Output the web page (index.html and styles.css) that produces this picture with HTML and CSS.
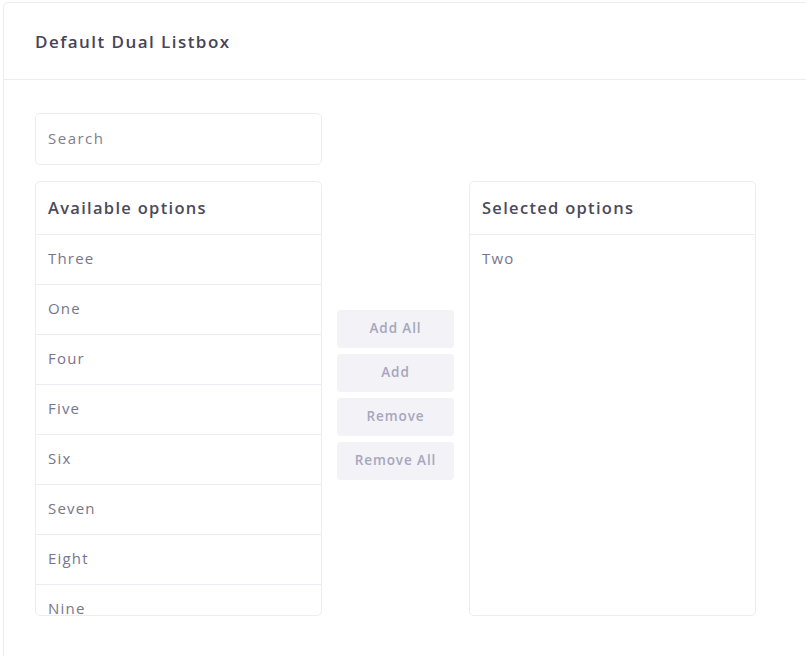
FILE: index.html
```html
<!DOCTYPE html>
<html lang="en">
<head>
<meta charset="utf-8">
<title>Default Dual Listbox</title>
<link rel="stylesheet" href="styles.css">
</head>
<body>
<div class="card">
  <div class="card-header">
    <h3 class="card-title">Default Dual Listbox</h3>
  </div>
  <div class="card-body">
    <input class="search" type="text" placeholder="Search">
    <div class="dual">
      <div class="list">
        <div class="list-title">Available options</div>
        <ul class="items">
          <li>Three</li>
          <li>One</li>
          <li>Four</li>
          <li>Five</li>
          <li>Six</li>
          <li>Seven</li>
          <li>Eight</li>
          <li>Nine</li>
        </ul>
      </div>
      <div class="actions">
        <button class="btn">Add All</button>
        <button class="btn">Add</button>
        <button class="btn">Remove</button>
        <button class="btn">Remove All</button>
      </div>
      <div class="list">
        <div class="list-title">Selected options</div>
        <ul class="items">
          <li class="plain">Two</li>
        </ul>
      </div>
    </div>
  </div>
</div>
</body>
</html>
```
FILE: styles.css
```css
html, body {
  margin: 0;
  padding: 0;
  overflow: hidden;
  background: #ffffff;
}
body {
  font-family: "Open Sans", "Noto Sans", sans-serif;
  padding: 2px 0 0 3px;
}
.card {
  width: 860px;
  border: 1px solid #ececf4;
  border-radius: 5px;
  background: #ffffff;
}
.card-header {
  height: 76px;
  border-bottom: 1px solid #ececf4;
  display: flex;
  align-items: center;
  padding: 0 31px;
}
.card-title {
  margin: 0;
  font-size: 17px;
  font-weight: 600;
  color: #464457;
  letter-spacing: 1.45px;
}
.card-body {
  padding: 33px 31px 80px;
}
.search {
  display: block;
  box-sizing: border-box;
  width: 287px;
  height: 52px;
  margin: 0 0 16px;
  padding: 0 12px 3px;
  border: 1px solid #ececf4;
  border-radius: 5px;
  font-family: inherit;
  font-size: 15px;
  letter-spacing: 1.5px;
  color: #6e6c80;
  outline: none;
}
.search::placeholder {
  color: #7e7e90;
}
.dual {
  display: flex;
  gap: 15px;
  height: 435px;
}
.list {
  box-sizing: border-box;
  width: 287px;
  height: 435px;
  border: 1px solid #ececf4;
  border-radius: 5px;
  overflow: hidden;
}
.list-title {
  height: 53px;
  display: flex;
  align-items: center;
  padding: 0 12px 1px;
  box-sizing: border-box;
  border-bottom: 1px solid #ececf4;
  font-size: 16.5px;
  font-weight: 600;
  letter-spacing: 1.3px;
  color: #4b4a5c;
}
.items {
  list-style: none;
  margin: 0;
  padding: 0;
}
.items li {
  height: 50px;
  box-sizing: border-box;
  display: flex;
  align-items: center;
  padding: 0 12px 3px;
  border-bottom: 1px solid #ececf4;
  font-size: 15px;
  letter-spacing: 1.2px;
  color: #77768c;
}
.items li.plain {
  border-bottom-color: transparent;
}
.actions {
  width: 117px;
  display: flex;
  flex-direction: column;
  justify-content: center;
  gap: 6px;
  padding-bottom: 7px;
}
.btn {
  height: 38px;
  border: none;
  border-radius: 4px;
  background: #f2f2f7;
  color: #a7a6bd;
  font-family: inherit;
  font-size: 13.5px;
  font-weight: 600;
  letter-spacing: 0.9px;
  padding: 0 0 2px;
}
```
